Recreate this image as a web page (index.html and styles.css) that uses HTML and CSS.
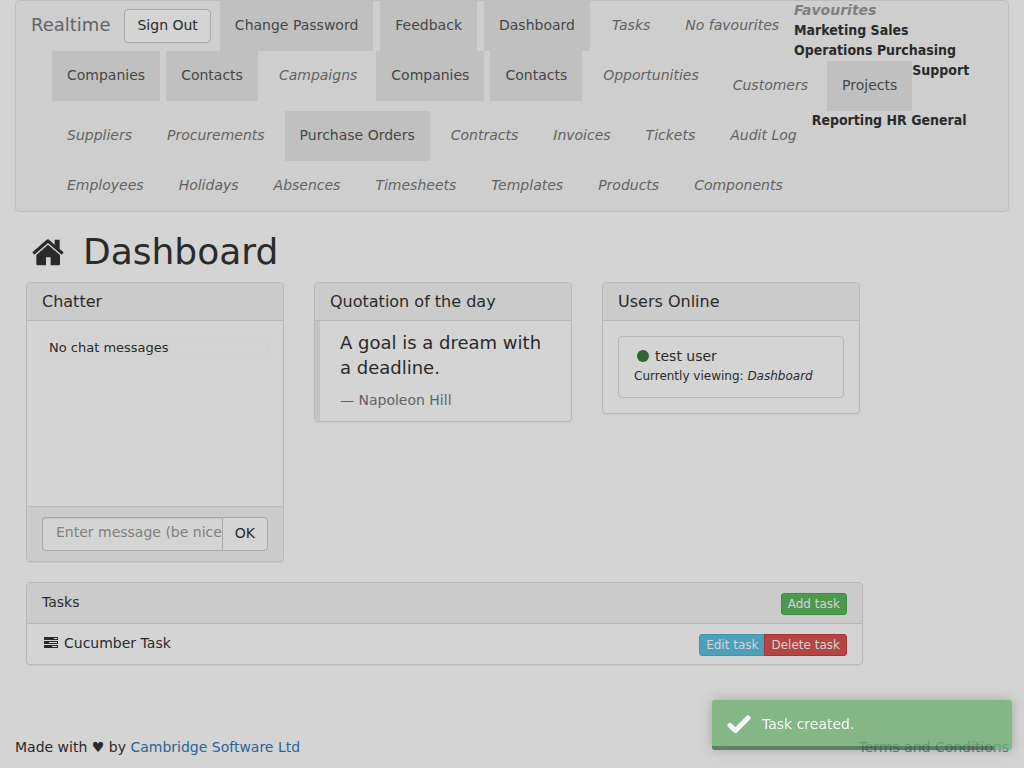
FILE: index.html
```html
<!DOCTYPE html>
<html lang="en">
<head>
<meta charset="utf-8">
<title>Dashboard - Realtime</title>
<link rel="stylesheet" href="styles.css">
</head>
<body>
<div class="page">
  <nav class="navbar">
    <div class="nav-row nav-first">
      <a class="brand" href="#">Realtime</a>
      <button class="btn sign-out" type="button">Sign Out</button>
      <a class="nav-item active" href="#">Change Password</a>
      <a class="nav-item active" href="#">Feedback</a>
      <a class="nav-item active" href="#">Dashboard</a>
      <a class="nav-item" href="#">Tasks</a>
      <span class="nav-item last">No favourites</span>
      <div class="groups"><em class="favourites">Favourites</em><b>Marketing Sales</b><b>Operations Purchasing</b></div>
    </div>
    <div class="nav-row nav-second">
      <a class="nav-item active" href="#">Companies</a>
      <a class="nav-item active" href="#">Contacts</a>
      <a class="nav-item" href="#">Campaigns</a>
      <a class="nav-item active" href="#">Companies</a>
      <a class="nav-item active" href="#">Contacts</a>
      <a class="nav-item" href="#">Opportunities</a>
      <div class="dropped">
        <a class="nav-item" href="#">Customers</a>
        <a class="nav-item active last" href="#">Projects</a>
        <b>Support</b>
      </div>
    </div>
    <div class="nav-row">
      <a class="nav-item" href="#">Suppliers</a>
      <a class="nav-item" href="#">Procurements</a>
      <a class="nav-item active" href="#">Purchase Orders</a>
      <a class="nav-item" href="#">Contracts</a>
      <a class="nav-item" href="#">Invoices</a>
      <a class="nav-item" href="#">Tickets</a>
      <a class="nav-item last" href="#">Audit Log</a>
      <b>Reporting HR General</b>
    </div>
    <div class="nav-row">
      <a class="nav-item" href="#">Employees</a>
      <a class="nav-item" href="#">Holidays</a>
      <a class="nav-item" href="#">Absences</a>
      <a class="nav-item" href="#">Timesheets</a>
      <a class="nav-item" href="#">Templates</a>
      <a class="nav-item" href="#">Products</a>
      <a class="nav-item" href="#">Components</a>
    </div>
  </nav>

  <main class="content">
    <h1 class="title">
      <svg class="home" viewBox="0 0 102 84" aria-hidden="true"><path d="M51 4Q53 4 55 6L71 20V5H86V33L98 43 92 50 51 15 10 50 4 43 46 6Q49 4 51 4z"/><path d="M51 20 87 51V78Q87 82 83 82H59V58H45V82H20Q16 82 16 78V51z"/></svg>
      Dashboard
    </h1>
    <div class="panels">
      <section class="panel">
        <h2 class="panel-heading">Chatter</h2>
        <div class="panel-body chat"><p class="chat-empty">No chat messages</p></div>
        <form class="panel-footer">
          <input class="chat-input" type="text" aria-label="Message" placeholder="Enter message (be nice!)">
          <button class="btn ok" type="button">OK</button>
        </form>
      </section>
      <section class="panel">
        <h2 class="panel-heading">Quotation of the day</h2>
        <blockquote class="quote"><p>A goal is a dream with a deadline.</p><footer>— Napoleon Hill</footer></blockquote>
      </section>
      <section class="panel">
        <h2 class="panel-heading">Users Online</h2>
        <div class="panel-body">
          <div class="user">
            <div class="user-name"><span class="dot"></span>test user</div>
            <div class="viewing">Currently viewing: <em>Dashboard</em></div>
          </div>
        </div>
      </section>
    </div>
    <section class="panel tasks">
      <div class="task-row task-heading"><span>Tasks</span><button class="btn small green" type="button">Add task</button></div>
      <div class="task-row">
        <span class="task-name"><svg class="task-icon" viewBox="0 0 14 11" aria-hidden="true"><path fill-rule="evenodd" d="M0 0h14v3H0zM10 1v1h3V1zM0 4h14v3H0zM5 5v1h8V5zM0 8h14v3H0zM8 9v1h5V9z"/></svg>Cucumber Task</span>
        <span class="btn-group"><button class="btn small blue" type="button">Edit task</button><button class="btn small red" type="button">Delete task</button></span>
      </div>
    </section>
  </main>

  <footer class="footer">
    <span>Made with ♥ by <a href="#">Cambridge Software Ltd</a></span>
    <a href="#">Terms and Conditions</a>
  </footer>
</div>
<div class="toast" role="status">
  <svg class="check" viewBox="0 0 24 18" aria-hidden="true"><path d="M3 10.500 8.500 15.500 21 3" fill="none" stroke="#fff" stroke-width="5" stroke-linecap="round" stroke-linejoin="miter"/></svg>
  Task created.
  <div class="toast-progress"></div>
</div>
</body>
</html>
```
FILE: styles.css
```css
* { box-sizing: border-box; }
body {
  margin: 0;
  background: #d4d4d4;
  color: #2a2a2a;
  font: 14px/20px "DejaVu Sans", sans-serif;
}
a { color: #2b6496; text-decoration: none; }
h1, h2, p, blockquote { margin: 0; font-weight: 400; }
button, input { font: inherit; color: inherit; }
.page { padding: 0 15px; }

.navbar {
  border: 1px solid #bfbfbf;
  border-radius: 4px;
  background: #cecece;
  white-space: nowrap;
}
.nav-row { display: flex; align-items: flex-start; height: 50px; padding-left: 36px; }
.nav-first { padding-left: 15px; }
.nav-second { height: 60px; }
.nav-item { padding: 14px 15px 16px; margin-right: 5px; color: #636363; font-style: italic; }
.nav-item.active { margin-right: 6px; background: #c0c0c0; color: #464646; font-style: normal; }
.nav-first .nav-item.active { margin-right: 7px; }
.nav-second .nav-item:not(.active) { margin-right: 4px; }
.nav-row .nav-item.last { margin-right: 0; }
.nav-row b { font-family: "DejaVu Sans Condensed", "DejaVu Sans", sans-serif; line-height: 20px; }
.nav-row > b, .dropped > b, .groups { margin-top: -1px; }
.dropped { display: flex; align-items: flex-start; padding-top: 10px; }
.brand { padding: 14px 0 16px; margin-right: 14px; color: #636363; font-size: 18px; }
.groups { display: flex; flex-direction: column; }
.favourites { color: #808080; font-weight: 700; }

.btn {
  padding: 5px 12px 7px;
  border: 1px solid #a9a9a9;
  border-radius: 4px;
  background: #d4d4d4;
  line-height: 20px;
}
.sign-out { margin: 8px 9px 0 0; }
.small { padding: 1px 6px; border-radius: 3px; font-size: 12px; line-height: 18px; color: #d4d4d4; }
.green { background: #4c984c; border-color: #3f8c3f; }
.blue { background: #4ca0b9; border-color: #3b97b2; border-radius: 3px 0 0 3px; }
.red { background: #b34542; border-color: #a9302c; border-radius: 0 3px 3px 0; }
.btn-group { display: flex; }
.btn-group .red { margin-left: -1px; }

.content { padding: 20px 11px 0; }
.title { display: flex; align-items: center; gap: 18px; padding-left: 5px; margin-bottom: 10px; font-size: 36px; line-height: 40px; }
.home { width: 34px; height: 28px; fill: #2a2a2a; }
.panels { display: grid; grid-template-columns: repeat(3, 258px); gap: 30px; align-items: start; margin-bottom: 20px; }
.panel { border: 1px solid #b8b8b8; border-radius: 4px; box-shadow: 0 1px 1px rgba(0, 0, 0, .05); }
.panel-heading { padding: 10px 15px; border-bottom: 1px solid #b8b8b8; border-radius: 3px 3px 0 0; background: #cbcbcb; font-size: 16px; line-height: 17px; }
.panel-body { padding: 15px; }
.chat { height: 185px; }
.chat-empty { padding: 0 6px; border: 1px solid #d1d1d1; font-size: 13px; line-height: 17px; margin-top: 2px; }
.panel-footer { display: flex; padding: 10px 15px; border-top: 1px solid #b8b8b8; border-radius: 0 0 3px 3px; background: #cbcbcb; }
.chat-input {
  flex: 1;
  min-width: 0;
  height: 34px;
  padding: 4px 0 8px 13px;
  border: 1px solid #a9a9a9;
  border-right: 0;
  border-radius: 4px 0 0 4px;
  background: #d4d4d4;
  box-shadow: inset 0 1px 1px rgba(0, 0, 0, .075);
}
.chat-input::placeholder { color: #808080; opacity: 1; }
.ok { border-radius: 0 4px 4px 0; }
.quote { padding: 9px 20px 11px; border-left: 5px solid #c4c4c4; }
.quote p { font-size: 18px; line-height: 25px; margin-bottom: 10px; }
.quote footer { color: #636363; }
.user { padding: 9px 15px 11px; border: 1px solid #b8b8b8; border-radius: 4px; }
.user-name { display: flex; align-items: center; gap: 6px; padding-left: 3px; }
.dot { width: 12px; height: 12px; border-radius: 50%; background: #316333; }
.viewing { font-size: 12px; }

.tasks { max-width: 837px; }
.task-row { display: flex; justify-content: space-between; height: 40px; padding: 10px 15px; }
.task-row span { line-height: 18px; }
.task-heading { height: 41px; border-bottom: 1px solid #b8b8b8; border-radius: 3px 3px 0 0; background: #cbcbcb; }
.task-row > .btn, .btn-group { height: 22px; }
.task-icon { width: 14px; height: 11px; margin: 0 6px 0 2px; fill: #2a2a2a; }

.footer { display: flex; justify-content: space-between; padding: 72px 0 10px; }

.toast {
  position: fixed;
  right: 12px;
  bottom: 18px;
  display: flex;
  align-items: center;
  gap: 11px;
  width: 300px;
  height: 50px;
  padding: 0 15px 2px;
  border-radius: 3px;
  overflow: hidden;
  background: #71ae71;
  box-shadow: 0 0 12px #999;
  color: #fff;
  opacity: .8;
}
.check { width: 24px; height: 18px; }
.toast-progress { position: absolute; left: 0; bottom: 0; width: 94%; height: 4px; background: #000; opacity: .4; }
```
